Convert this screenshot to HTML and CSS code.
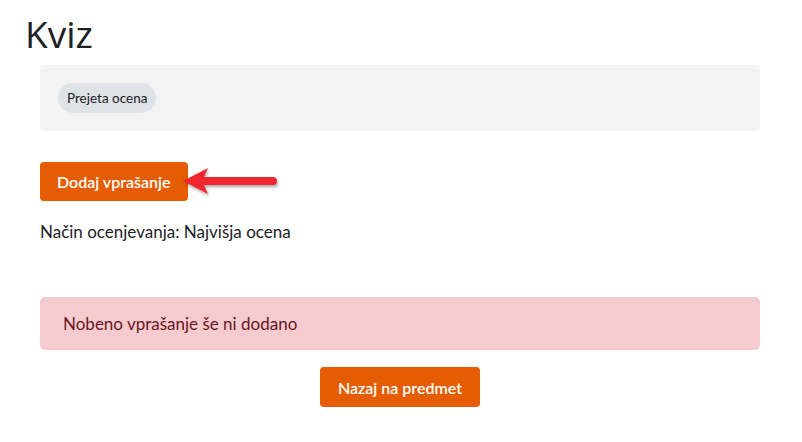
FILE: index.html
```html
<!DOCTYPE html>
<html lang="sl">
<head>
<meta charset="utf-8">
<title>Kviz</title>
<link rel="stylesheet" href="styles.css">
</head>
<body>
<div class="page">
  <h1 class="title">Kviz</h1>
  <div class="content">
    <div class="panel">
      <span class="badge">Prejeta ocena</span>
    </div>
    <div class="action-row">
      <button class="btn">Dodaj vprašanje</button>
      <svg class="arrow" width="104" height="38" viewBox="0 0 104 38">
        <defs>
          <filter id="sh" x="-20%" y="-40%" width="140%" height="180%">
            <feDropShadow dx="1" dy="2" stdDeviation="1.6" flood-color="#000" flood-opacity="0.35"/>
          </filter>
        </defs>
        <g filter="url(#sh)" fill="#f2252d">
          <path d="M2 17 L27 4 L23 13 L92 13 A4 4 0 0 1 92 21 L23 21 L27 30 Z"/>
        </g>
      </svg>
    </div>
    <p class="method">Način ocenjevanja: Najvišja ocena</p>
    <div class="alert">Nobeno vprašanje še ni dodano</div>
    <div class="center">
      <button class="btn">Nazaj na predmet</button>
    </div>
  </div>
</div>
</body>
</html>
```

FILE: styles.css
```css
* { box-sizing: border-box; }
html, body { margin: 0; padding: 0; background: #fff; }
body {
  font-family: Lato, "Noto Sans", sans-serif;
  color: #1d2125;
  font-size: 17px;
}
.page { padding: 12px 0 0 0; }
.title {
  margin: 0 0 0 25px;
  font-family: "Open Sans", Lato, sans-serif;
  font-weight: 400;
  font-size: 37px;
  line-height: 44px;
  color: #1d2125;
}
.content {
  width: 720px;
  margin: 9px 0 0 40px;
}
.panel {
  background: #f3f3f3;
  border-radius: 5px;
  padding: 18px 18px;
  display: flex;
}
.badge {
  display: inline-block;
  background: #dfe2e6;
  color: #1d2125;
  border-radius: 15px;
  font-size: 13.5px;
  line-height: 30px;
  height: 30px;
  padding: 0 9px;
}
.action-row {
  margin-top: 30px;
  display: flex;
  align-items: center;
}
.btn {
  font-family: Lato, "Noto Sans", sans-serif;
  font-size: 16px;
  font-weight: 600;
  color: #fff;
  background: #e65c00;
  border: none;
  border-radius: 4px;
  height: 39px;
  padding: 0 17px;
}
.arrow { display: block; margin-left: -7px; margin-top: 3px; }
.method {
  margin: 18px 0 0 0;
  line-height: 24px;
}
.alert {
  margin-top: 53px;
  background: #f5cbd0;
  color: #6b1520;
  border-radius: 5px;
  padding: 0 23px;
  height: 53px;
  line-height: 53px;
}
.center {
  display: flex;
  justify-content: center;
  margin-top: 17px;
}
.center .btn { height: 40px; padding: 0 18px; }
```
